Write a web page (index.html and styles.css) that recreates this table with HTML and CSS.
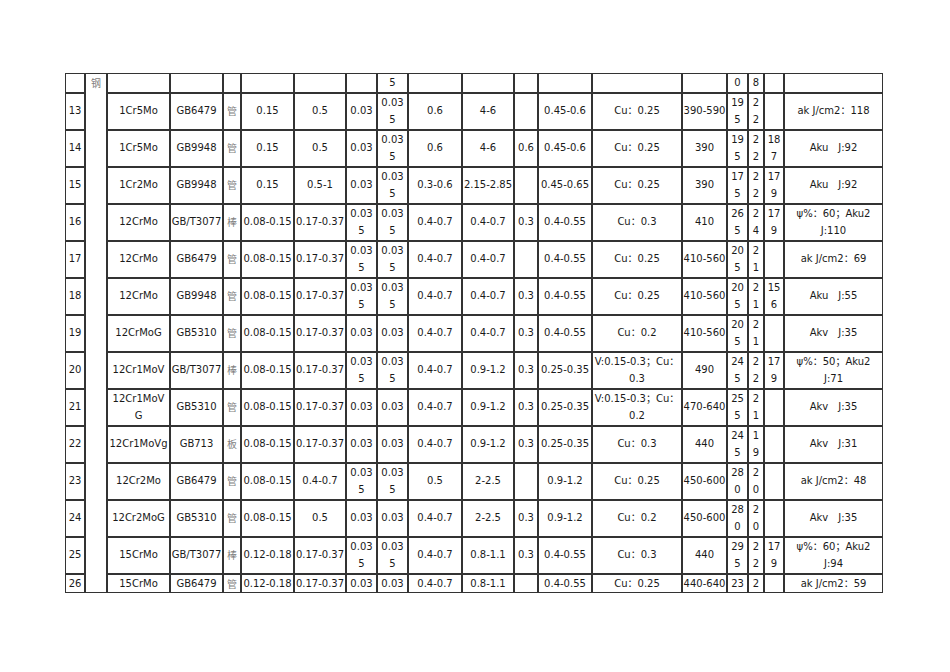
FILE: index.html
```html
<!DOCTYPE html>
<html lang="zh">
<head>
<meta charset="utf-8">
<title>钢材性能表</title>
<link rel="stylesheet" href="styles.css">
</head>
<body>
<div class="page">
<table class="grid">
<colgroup>
<col class="w20"><col class="w22"><col class="w63"><col class="w53"><col class="w18"><col class="w53"><col class="w52"><col class="w31"><col class="w31"><col class="w54"><col class="w52"><col class="w24"><col class="w54"><col class="w90"><col class="w45"><col class="w21"><col class="w16"><col class="w20"><col class="w99">
</colgroup>
<tbody>
<tr class="short"><td></td><td class="steel" rowspan="15">钢</td><td></td><td></td><td></td><td></td><td></td><td></td><td>5</td><td></td><td></td><td></td><td></td><td></td><td></td><td>0</td><td>8</td><td></td><td></td></tr>
<tr><td>13</td><td>1Cr5Mo</td><td>GB6479</td><td class="cn">管</td><td>0.15</td><td>0.5</td><td>0.03</td><td>0.03<br>5</td><td>0.6</td><td>4-6</td><td></td><td>0.45-0.6</td><td>Cu：0.25</td><td>390-590</td><td>19<br>5</td><td>2<br>2</td><td></td><td>ak J/cm2：118</td></tr>
<tr><td>14</td><td>1Cr5Mo</td><td>GB9948</td><td class="cn">管</td><td>0.15</td><td>0.5</td><td>0.03</td><td>0.03<br>5</td><td>0.6</td><td>4-6</td><td>0.6</td><td>0.45-0.6</td><td>Cu：0.25</td><td>390</td><td>19<br>5</td><td>2<br>2</td><td>18<br>7</td><td>Aku　J:92</td></tr>
<tr><td>15</td><td>1Cr2Mo</td><td>GB9948</td><td class="cn">管</td><td>0.15</td><td>0.5-1</td><td>0.03</td><td>0.03<br>5</td><td>0.3-0.6</td><td>2.15-2.85</td><td></td><td>0.45-0.65</td><td>Cu：0.25</td><td>390</td><td>17<br>5</td><td>2<br>2</td><td>17<br>9</td><td>Aku　J:92</td></tr>
<tr><td>16</td><td>12CrMo</td><td>GB/T3077</td><td class="cn">棒</td><td>0.08-0.15</td><td>0.17-0.37</td><td>0.03<br>5</td><td>0.03<br>5</td><td>0.4-0.7</td><td>0.4-0.7</td><td>0.3</td><td>0.4-0.55</td><td>Cu：0.3</td><td>410</td><td>26<br>5</td><td>2<br>4</td><td>17<br>9</td><td>ψ%：60；Aku2<br>J:110</td></tr>
<tr><td>17</td><td>12CrMo</td><td>GB6479</td><td class="cn">管</td><td>0.08-0.15</td><td>0.17-0.37</td><td>0.03<br>5</td><td>0.03<br>5</td><td>0.4-0.7</td><td>0.4-0.7</td><td></td><td>0.4-0.55</td><td>Cu：0.25</td><td>410-560</td><td>20<br>5</td><td>2<br>1</td><td></td><td>ak J/cm2：69</td></tr>
<tr><td>18</td><td>12CrMo</td><td>GB9948</td><td class="cn">管</td><td>0.08-0.15</td><td>0.17-0.37</td><td>0.03<br>5</td><td>0.03<br>5</td><td>0.4-0.7</td><td>0.4-0.7</td><td>0.3</td><td>0.4-0.55</td><td>Cu：0.25</td><td>410-560</td><td>20<br>5</td><td>2<br>1</td><td>15<br>6</td><td>Aku　J:55</td></tr>
<tr><td>19</td><td>12CrMoG</td><td>GB5310</td><td class="cn">管</td><td>0.08-0.15</td><td>0.17-0.37</td><td>0.03</td><td>0.03</td><td>0.4-0.7</td><td>0.4-0.7</td><td>0.3</td><td>0.4-0.55</td><td>Cu：0.2</td><td>410-560</td><td>20<br>5</td><td>2<br>1</td><td></td><td>Akv　J:35</td></tr>
<tr><td>20</td><td>12Cr1MoV</td><td>GB/T3077</td><td class="cn">棒</td><td>0.08-0.15</td><td>0.17-0.37</td><td>0.03<br>5</td><td>0.03<br>5</td><td>0.4-0.7</td><td>0.9-1.2</td><td>0.3</td><td>0.25-0.35</td><td>V:0.15-0.3；Cu：<br>0.3</td><td>490</td><td>24<br>5</td><td>2<br>2</td><td>17<br>9</td><td>ψ%：50；Aku2<br>J:71</td></tr>
<tr><td>21</td><td>12Cr1MoV<br>G</td><td>GB5310</td><td class="cn">管</td><td>0.08-0.15</td><td>0.17-0.37</td><td>0.03</td><td>0.03</td><td>0.4-0.7</td><td>0.9-1.2</td><td>0.3</td><td>0.25-0.35</td><td>V:0.15-0.3；Cu：<br>0.2</td><td>470-640</td><td>25<br>5</td><td>2<br>1</td><td></td><td>Akv　J:35</td></tr>
<tr><td>22</td><td>12Cr1MoVg</td><td>GB713</td><td class="cn">板</td><td>0.08-0.15</td><td>0.17-0.37</td><td>0.03</td><td>0.03</td><td>0.4-0.7</td><td>0.9-1.2</td><td>0.3</td><td>0.25-0.35</td><td>Cu：0.3</td><td>440</td><td>24<br>5</td><td>1<br>9</td><td></td><td>Akv　J:31</td></tr>
<tr><td>23</td><td>12Cr2Mo</td><td>GB6479</td><td class="cn">管</td><td>0.08-0.15</td><td>0.4-0.7</td><td>0.03<br>5</td><td>0.03<br>5</td><td>0.5</td><td>2-2.5</td><td></td><td>0.9-1.2</td><td>Cu：0.25</td><td>450-600</td><td>28<br>0</td><td>2<br>0</td><td></td><td>ak J/cm2：48</td></tr>
<tr><td>24</td><td>12Cr2MoG</td><td>GB5310</td><td class="cn">管</td><td>0.08-0.15</td><td>0.5</td><td>0.03</td><td>0.03</td><td>0.4-0.7</td><td>2-2.5</td><td>0.3</td><td>0.9-1.2</td><td>Cu：0.2</td><td>450-600</td><td>28<br>0</td><td>2<br>0</td><td></td><td>Akv　J:35</td></tr>
<tr><td>25</td><td>15CrMo</td><td>GB/T3077</td><td class="cn">棒</td><td>0.12-0.18</td><td>0.17-0.37</td><td>0.03<br>5</td><td>0.03<br>5</td><td>0.4-0.7</td><td>0.8-1.1</td><td>0.3</td><td>0.4-0.55</td><td>Cu：0.3</td><td>440</td><td>29<br>5</td><td>2<br>2</td><td>17<br>9</td><td>ψ%：60；Aku2<br>J:94</td></tr>
<tr class="short"><td>26</td><td>15CrMo</td><td>GB6479</td><td class="cn">管</td><td>0.12-0.18</td><td>0.17-0.37</td><td>0.03</td><td>0.03</td><td>0.4-0.7</td><td>0.8-1.1</td><td></td><td>0.4-0.55</td><td>Cu：0.25</td><td>440-640</td><td>23</td><td>2</td><td></td><td>ak J/cm2：59</td></tr>
</tbody>
</table>
</div>
</body>
</html>
```

FILE: styles.css
```css
html, body {
  margin: 0;
  padding: 0;
  background: #ffffff;
}

.page {
  padding: 73px 0 0 65px;
}

.grid {
  table-layout: fixed;
  width: 818px;
  border-collapse: separate;
  border-spacing: 0;
  font-family: "DejaVu Sans", "Noto Sans CJK SC", sans-serif;
  font-size: 10px;
  color: #1a1a1a;
}

.grid td {
  border: 1px solid #333333;
  padding: 0;
  line-height: 17.5px;
  text-align: center;
  vertical-align: middle;
  white-space: nowrap;
  overflow: visible;
}

.grid td.cn {
  font-family: "Noto Sans CJK SC", sans-serif;
  font-size: 10px;
  color: #808080;
}

.grid td.steel {
  vertical-align: top;
  font-family: "Noto Sans CJK SC", sans-serif;
  font-size: 10px;
  color: #808080;
}

.w20 { width: 20px; }
.w22 { width: 22px; }
.w63 { width: 63px; }
.w53 { width: 53px; }
.w18 { width: 18px; }
.w52 { width: 52px; }
.w31 { width: 31px; }
.w54 { width: 54px; }
.w24 { width: 24px; }
.w90 { width: 90px; }
.w45 { width: 45px; }
.w21 { width: 21px; }
.w16 { width: 16px; }
.w99 { width: 99px; }
```
